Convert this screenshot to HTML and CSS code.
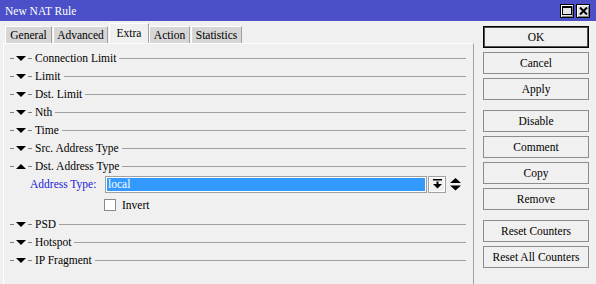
FILE: index.html
```html
<!DOCTYPE html>
<html lang="en">
<head>
  <meta charset="UTF-8">
  <title>New NAT Rule</title>
  <link rel="stylesheet" href="styles.css">
</head>
<body>
  <div class="window">
    <!-- Title bar -->
    <div class="titlebar">
      <span class="title">New NAT Rule</span>
      <div class="winbtns">
        <span class="winbtn"><svg width="10" height="9" viewBox="0 0 10 9"><rect x="0.5" y="0.5" width="9" height="8" fill="none" stroke="#000"/><rect x="0" y="0" width="10" height="2" fill="#000"/></svg></span>
        <span class="winbtn"><svg width="9" height="8" viewBox="0 0 9 8"><path d="M1 0.5 L8 7.5 M8 0.5 L1 7.5" stroke="#000" stroke-width="2"/></svg></span>
      </div>
    </div>

    <div class="main">
      <div class="left">
        <div class="tabs">
          <div class="tab tab-general">General</div>
          <div class="tab tab-advanced">Advanced</div>
          <div class="tab tab-extra active">Extra</div>
          <div class="tab tab-action">Action</div>
          <div class="tab tab-statistics">Statistics</div>
        </div>

        <div class="panel">
          <div class="section"><span class="dash"></span><span class="tri down"></span><span class="dash"></span><span class="label">Connection Limit</span><span class="rule"></span></div>
          <div class="section"><span class="dash"></span><span class="tri down"></span><span class="dash"></span><span class="label">Limit</span><span class="rule"></span></div>
          <div class="section"><span class="dash"></span><span class="tri down"></span><span class="dash"></span><span class="label">Dst. Limit</span><span class="rule"></span></div>
          <div class="section"><span class="dash"></span><span class="tri down"></span><span class="dash"></span><span class="label">Nth</span><span class="rule"></span></div>
          <div class="section"><span class="dash"></span><span class="tri down"></span><span class="dash"></span><span class="label">Time</span><span class="rule"></span></div>
          <div class="section"><span class="dash"></span><span class="tri down"></span><span class="dash"></span><span class="label">Src. Address Type</span><span class="rule"></span></div>
          <div class="section"><span class="dash"></span><span class="tri up"></span><span class="dash"></span><span class="label">Dst. Address Type</span><span class="rule"></span></div>

          <!-- Expanded section -->
          <div class="field-row">
            <span class="field-label">Address Type:</span>
            <span class="select">local</span>
            <span class="drop"><svg width="9" height="10" viewBox="0 0 9 10"><rect x="0" y="0" width="9" height="1.5" fill="#000"/><rect x="3.5" y="2.5" width="2" height="3" fill="#000"/><path d="M0 5 L9 5 L4.5 9.5 Z" fill="#000"/></svg></span>
            <span class="spin"><svg width="11" height="13" viewBox="0 0 11 13"><path d="M0 5 L5.5 0 L11 5 Z" fill="#000"/><path d="M0 7.5 L11 7.5 L5.5 12.5 Z" fill="#000"/></svg></span>
          </div>
          <div class="check-row">
            <span class="checkbox"></span>
            <span>Invert</span>
          </div>

          <div class="section"><span class="dash"></span><span class="tri down"></span><span class="dash"></span><span class="label">PSD</span><span class="rule"></span></div>
          <div class="section"><span class="dash"></span><span class="tri down"></span><span class="dash"></span><span class="label">Hotspot</span><span class="rule"></span></div>
          <div class="section"><span class="dash"></span><span class="tri down"></span><span class="dash"></span><span class="label">IP Fragment</span><span class="rule"></span></div>
        </div>
      </div>

      <!-- Buttons on the right -->
      <div class="buttons">
        <div class="group">
          <div class="btn default">OK</div>
          <div class="btn">Cancel</div>
          <div class="btn">Apply</div>
        </div>
        <div class="group">
          <div class="btn">Disable</div>
          <div class="btn">Comment</div>
          <div class="btn">Copy</div>
          <div class="btn">Remove</div>
        </div>
        <div class="group">
          <div class="btn">Reset Counters</div>
          <div class="btn">Reset All Counters</div>
        </div>
      </div>
    </div>
  </div>
</body>
</html>
```

FILE: styles.css
```css
body {
  margin: 0;
  background: #f0f0f0;
  font-family: "Liberation Serif", "Times New Roman", serif;
  font-size: 11.5px;
  color: #000;
}

.window {
  width: 596px;
  height: 284px;
  overflow: hidden;
}

.titlebar {
  height: 21px;
  background: #4b4fc8;
  display: flex;
  align-items: center;
  justify-content: space-between;
  padding: 0 6px 0 5px;
  box-sizing: border-box;
}

.title {
  color: #fff;
  font-size: 11.5px;
}

.winbtns {
  display: flex;
  gap: 2px;
}

.winbtn {
  width: 14px;
  height: 14px;
  box-sizing: border-box;
  background: #e4e4e4;
  border: 1px solid #000;
  box-shadow: inset 1px 1px 0 #fff, inset -1px -1px 0 #808080;
  display: flex;
  align-items: center;
  justify-content: center;
}

.main {
  display: flex;
}

.left {
  width: 474px;
  display: flex;
  flex-direction: column;
}

.tabs {
  display: flex;
  align-items: flex-end;
  height: 22px;
  padding-left: 5px;
}

.tab {
  height: 17px;
  line-height: 16px;
  box-sizing: border-box;
  text-align: center;
  background: #d6d6d6;
  border-top: 1px solid #fff;
  border-left: 1px solid #fff;
  border-right: 1px solid #a0a0a0;
  margin-right: 1px;
}

.tab-general { width: 47px; }
.tab-advanced { width: 55px; }
.tab-extra { width: 40px; }
.tab-action { width: 41px; }
.tab-statistics { width: 51px; }

.tab.active {
  height: 20px;
  line-height: 18px;
  background: #f0f0f0;
  margin-right: 0;
}

.panel {
  margin-left: 3px;
  height: 241px;
  border-top: 1px solid #fff;
  border-left: 1px solid #fff;
  border-right: 1px solid #a0a0a0;
  padding: 5px 7px 0 6px;
  box-sizing: border-box;
}

.section {
  height: 18px;
  display: flex;
  align-items: center;
}

.dash {
  width: 4px;
  height: 1px;
  background: #808080;
}

.tri {
  width: 0;
  height: 0;
  margin: 0 2px;
  border-left: 5px solid transparent;
  border-right: 5px solid transparent;
}

.tri.down {
  border-top: 5px solid #000;
}

.tri.up {
  border-bottom: 5px solid #000;
}

.label {
  margin: 0 3px 0 3px;
  white-space: nowrap;
}

.rule {
  flex: 1;
  height: 1px;
  background: #a0a0a0;
}

.field-row {
  height: 18px;
  display: flex;
  align-items: center;
  padding-left: 20px;
}

.field-label {
  width: 75px;
  color: #1a1ad8;
}

.select {
  width: 322px;
  height: 17px;
  box-sizing: border-box;
  background: #3399ff;
  border: 1px solid #a0a0a0;
  box-shadow: inset 0 0 0 1px #fff;
  color: #fff;
  padding-left: 2px;
  line-height: 15px;
}

.drop {
  width: 18px;
  height: 17px;
  box-sizing: border-box;
  margin-left: 1px;
  border: 1px solid #a0a0a0;
  box-shadow: inset 0 0 0 1px #fff;
  display: flex;
  align-items: center;
  justify-content: center;
}

.spin {
  margin-left: 4px;
  display: flex;
  align-items: center;
}

.check-row {
  height: 22px;
  display: flex;
  align-items: center;
  gap: 6px;
  padding: 2px 0 0 94px;
  box-sizing: border-box;
}

.checkbox {
  width: 12px;
  height: 12px;
  box-sizing: border-box;
  background: #fff;
  border: 1px solid #8a8a8a;
}

.buttons {
  margin: 5px 0 0 9px;
  width: 106px;
  display: flex;
  flex-direction: column;
  gap: 10px;
}

.group {
  display: flex;
  flex-direction: column;
  gap: 4px;
}

.btn {
  height: 22px;
  box-sizing: border-box;
  border: 1px solid #8c8c8c;
  background: #f0f0f0;
  text-align: center;
  line-height: 20px;
}

.btn.default {
  border-color: #000;
  box-shadow: inset 0 0 0 1px #505050;
}
```
